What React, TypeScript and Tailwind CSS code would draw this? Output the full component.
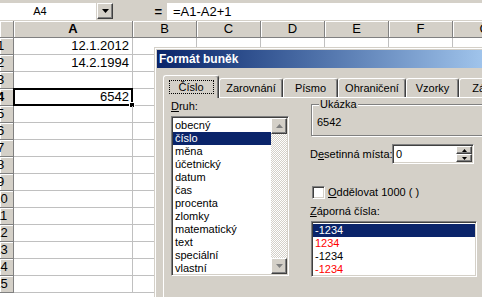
import React from "react";

const raised =
  "bg-[#d4d0c8] border border-t-white border-l-white border-r-[#404040] border-b-[#404040] shadow-[inset_-1px_-1px_0_#808080]";
const sunken =
  "bg-white border border-t-[#808080] border-l-[#808080] border-r-white border-b-white shadow-[inset_1px_1px_0_#404040,inset_-1px_-1px_0_#d4d0c8]";

function Tri({ up, color }: { up?: boolean; color: string }) {
  return (
    <svg width="7" height="4" viewBox="0 0 7 4" className="block">
      {up ? (
        <polygon points="3.5,0 7,4 0,4" fill={color} />
      ) : (
        <polygon points="0,0 7,0 3.5,4" fill={color} />
      )}
    </svg>
  );
}

function Tab({ label, w }: { label: string; w: string }) {
  return (
    <div
      className={`${w} shrink-0 h-[19px] border-t border-l border-r border-t-white border-l-white border-r-[#404040] shadow-[inset_-1px_0_0_#808080] rounded-t-[3px] text-[11px] leading-[18px] text-center overflow-hidden whitespace-nowrap`}
    >
      {label}
    </div>
  );
}

export default function App() {
  const rows = Array.from({ length: 15 }, (_, i) => i + 1);
  const others = ["B", "C", "D", "E", "F", "G"];
  const values: Record<number, string> = { 1: "12.1.2012", 2: "14.2.1994", 4: "6542" };
  const kinds = [
    "obecný",
    "číslo",
    "měna",
    "účetnický",
    "datum",
    "čas",
    "procenta",
    "zlomky",
    "matematický",
    "text",
    "speciální",
    "vlastní",
  ];
  const neg = [
    { t: "-1234", c: "text-white bg-[#0a246a]" },
    { t: "1234", c: "text-[#ff0000]" },
    { t: "-1234", c: "text-black" },
    { t: "-1234", c: "text-[#ff0000]" },
  ];

  return (
    <div className="relative w-[482px] h-[297px] overflow-hidden bg-white text-black font-['Liberation_Sans',Arial,sans-serif] select-none">
      {/* formula bar */}
      <div className="flex h-[21px] bg-[#d4d0c8] pt-[3px]">
        <div className="w-[96px] h-[17px] bg-white text-[11px] leading-[17px] text-center pr-[16px]">A4</div>
        <div className={`${raised} w-[16px] h-[16px] ml-[1px] flex items-center justify-center`}>
          <Tri color="#000" />
        </div>
        <div className="w-[54px] h-[17px] flex justify-end pr-[5px] text-[13px] leading-[17px] font-bold">=</div>
        <div className="flex-1 h-[17px] bg-white text-[13px] leading-[17px] pl-[6px]">=A1-A2+1</div>
      </div>

      {/* column headers */}
      <div className="flex h-[17px]">
        <div className="w-[14px] shrink-0 bg-[#d4d0c8] border-r border-b border-[#808080] shadow-[inset_1px_1px_0_#fff]" />
        <div className="w-[119px] shrink-0 bg-[#d4d0c8] border-r border-b border-[#808080] shadow-[inset_1px_1px_0_#fff] text-[13px] leading-[16px] text-center font-bold">
          A
        </div>
        {others.map((c) => (
          <div
            key={c}
            className="w-[64px] shrink-0 bg-[#d4d0c8] border-r border-b border-[#808080] shadow-[inset_1px_1px_0_#fff] text-[13px] leading-[16px] text-center"
          >
            {c}
          </div>
        ))}
      </div>

      {/* rows */}
      {rows.map((r) => (
        <div key={r} className="flex h-[17px]">
          <div className="w-[14px] shrink-0 overflow-hidden bg-[#d4d0c8] border-r border-b border-[#808080] shadow-[inset_1px_1px_0_#fff]">
            <div className={`w-[27px] -ml-[13px] text-center text-[13px] leading-[16px] ${r === 4 ? "font-bold" : ""}`}>{r}</div>
          </div>
          <div className="relative w-[119px] shrink-0 border-r border-b border-[#c0c0c0] text-[13px] leading-[16px] text-right pr-[3px]">
            {values[r] ?? ""}
            {r === 4 && (
              <div className="absolute -left-[1px] -top-[1px] w-[120px] h-[18px] border-2 border-black">
                <div className="absolute -right-[4px] -bottom-[4px] w-[6px] h-[6px] bg-black border border-white" />
              </div>
            )}
          </div>
          {others.map((c) => (
            <div key={c} className="w-[64px] shrink-0 border-r border-b border-[#c0c0c0]" />
          ))}
        </div>
      ))}

      {/* dialog */}
      <div className="absolute left-[154px] top-[47px] w-[340px] h-[262px] bg-[#d4d0c8] border-t border-l border-[#d4d0c8] shadow-[inset_1px_1px_0_#fff] pt-[2px] pl-[2px]">
        <div className="h-[18px] bg-linear-to-r from-[#0a246a] to-[#a6caf0] text-white font-bold text-[12px] leading-[18px] pl-[2px]">
          Formát buněk
        </div>
        {/* tabs */}
        <div className="flex items-end h-[29px] pl-[6px]">
          <div className="relative z-10 shrink-0 w-[56px] h-[23px] -mb-[1px] bg-[#d4d0c8] border-t border-l border-r border-t-white border-l-white border-r-[#404040] shadow-[inset_-1px_0_0_#808080] rounded-t-[3px] flex justify-center pt-[4px]">
            <div className="w-[45px] h-[14px] border border-dotted border-black text-[11px] leading-[12px] text-center">Číslo</div>
          </div>
          <Tab label="Zarovnání" w="w-[64px]" />
          <Tab label="Písmo" w="w-[55px]" />
          <Tab label="Ohraničení" w="w-[68px]" />
          <Tab label="Vzorky" w="w-[53px]" />
          <Tab label="Zámek" w="w-[60px]" />
        </div>
        {/* panel */}
        <div className="ml-[6px] h-[220px] border-t border-l border-white flex text-[11px]">
          {/* left column */}
          <div className="pl-[7px] pt-[2px] w-[125px] shrink-0">
            <div className="leading-[13px]">
              <span className="underline">D</span>ruh:
            </div>
            <div className={`${sunken} mt-[3px] w-[118px] h-[160px] p-[1px] flex`}>
              <div className="flex-1 pt-[1px]">
                {kinds.map((k, i) => (
                  <div
                    key={k}
                    className={`h-[13px] leading-[13px] pl-[2px] ${i === 1 ? "bg-[#0a246a] text-white" : ""}`}
                  >
                    {k}
                  </div>
                ))}
              </div>
              <div className="w-[16px] flex flex-col [background-image:repeating-conic-gradient(#fff_0_25%,#d4d0c8_0_50%)] [background-size:2px_2px]">
                <div className={`${raised} w-[16px] h-[16px] flex items-center justify-center`}>
                  <Tri up color="#808080" />
                </div>
                <div className="flex-1" />
                <div className={`${raised} w-[16px] h-[16px] flex items-center justify-center`}>
                  <Tri color="#808080" />
                </div>
              </div>
            </div>
          </div>
          {/* right column */}
          <div className="pl-[21px] flex-1">
            <fieldset className="h-[38px] border border-[#808080] shadow-[inset_1px_1px_0_#fff,1px_1px_0_#fff] pl-[5px] ml-[1px]">
              <legend className="ml-[2px] px-[1px] leading-[13px] bg-[#d4d0c8]">Ukázka</legend>
              <div className="leading-[13px] pt-[5px]">6542</div>
            </fieldset>
            <div className="flex items-center mt-[8px] h-[20px]">
              <div className="w-[82px] shrink-0 whitespace-nowrap">
                D<span className="underline">e</span>setinná místa:
              </div>
              <div className={`${sunken} w-[82px] h-[20px] flex p-[1px]`}>
                <div className="flex-1 pl-[2px] leading-[16px]">0</div>
                <div className="w-[16px] flex flex-col">
                  <div className={`${raised} h-[8px] flex items-center justify-center`}>
                    <svg width="5" height="3" viewBox="0 0 5 3"><polygon points="2.5,0 5,3 0,3" fill="#000" /></svg>
                  </div>
                  <div className={`${raised} h-[8px] flex items-center justify-center`}>
                    <svg width="5" height="3" viewBox="0 0 5 3"><polygon points="0,0 5,0 2.5,3" fill="#000" /></svg>
                  </div>
                </div>
              </div>
            </div>
            <div className="flex items-center mt-[22px] h-[13px] ml-[2px] gap-[3px]">
              <div className={`${sunken} w-[13px] h-[13px]`} />
              <div className="leading-[13px] whitespace-nowrap">
                <span className="underline">O</span>ddělovat 1000 ( )
              </div>
            </div>
            <div className="mt-[6px] leading-[13px]">
              <span className="underline">Z</span>áporná čísla:
            </div>
            <div className={`${sunken} mt-[3px] ml-[1px] w-[166px] h-[56px] p-[1px]`}>
              <div className="pt-[1px]">
                {neg.map((n, i) => (
                  <div key={i} className={`h-[13px] leading-[13px] pl-[2px] ${n.c}`}>
                    {n.t}
                  </div>
                ))}
              </div>
            </div>
          </div>
        </div>
      </div>
    </div>
  );
}
